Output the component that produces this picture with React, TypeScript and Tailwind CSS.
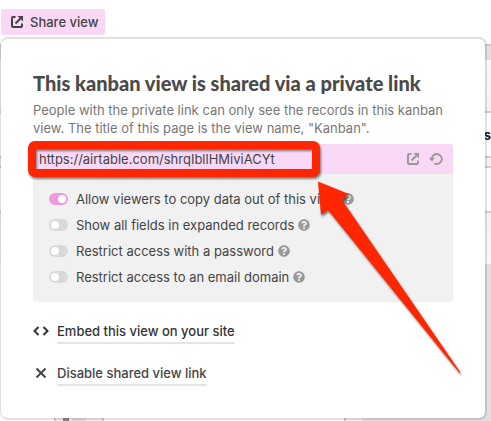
import { useState } from 'react'
import { FaQuestionCircle } from 'react-icons/fa'

const options = [
  { id: 'copy', label: 'Allow viewers to copy data out of this view', on: true },
  { id: 'fields', label: 'Show all fields in expanded records', on: false },
  { id: 'password', label: 'Restrict access with a password', on: false },
  { id: 'domain', label: 'Restrict access to an email domain', on: false },
]

const ShareIcon = ({ className }: { className?: string }) => (
  <svg viewBox="0 0 12 12" className={className} fill="none" stroke="currentColor" aria-hidden="true">
    <path d="M4.5 1H2Q1 1 1 2v8q0 1 1 1h8q1 0 1-1V7.5" strokeWidth="2" />
    <path d="M4.5 7.5 9.5 2.5" strokeWidth="2" />
    <path d="M6.5 0H12v5.5Z" fill="currentColor" stroke="none" />
  </svg>
)

const ResetIcon = () => (
  <svg viewBox="0 0 14 14" className="size-3.5" fill="none" stroke="currentColor" aria-hidden="true">
    <path d="M2.8 7a5 5 0 1 1 2.6 4.4" strokeWidth="1.8" />
    <path d="M0 6h5.8L2.9 9.4Z" fill="currentColor" stroke="none" />
  </svg>
)

const Option = ({ id, label, on }: (typeof options)[number]) => {
  const [checked, setChecked] = useState(on)

  return (
    <li className="flex items-center h-[26px]">
      <input
        id={id}
        type="checkbox"
        role="switch"
        checked={checked}
        onChange={(e) => setChecked(e.target.checked)}
        className="appearance-none flex items-center w-[19px] h-3 p-0.5 rounded-full bg-[#d9d9d9] checked:bg-[#f09ae0] checked:justify-end before:block before:size-2 before:rounded-full before:bg-white"
      />
      <label htmlFor={id} className="ml-2 mr-1">
        {label}
      </label>
      <button type="button" aria-label={`Help: ${label}`} className="text-[#999]">
        <FaQuestionCircle className="size-3" />
      </button>
    </li>
  )
}

// The kanban board that stays visible around the dialog
const Board = () => (
  <div className="[grid-area:1/1] flex flex-col min-w-0 overflow-hidden" aria-hidden="true">
    <div className="h-[7px]" />
    <div className="h-4 bg-[#e0e0e0] border-t-2 border-[#ccc]" />
    <div className="h-[53px] bg-linear-to-b from-[#fafafa] to-[#f2f2f2] border-b-2 border-[#d0d0d0]" />
    <div className="h-[43px] flex items-center justify-end font-bold text-[#222]">rs</div>
    <div className="h-3 bg-[#f2f2f2] border-y-2 border-[#d0d0d0]" />
    <div className="h-[45px] border-b-2 border-[#d0d0d0]" />
    <div className="h-[51px] bg-linear-to-b from-[#f2f2f2] to-[#fafafa]" />
    <div className="flex-1 flex items-end">
      <div className="flex-1 flex h-[3px]">
        <div className="ml-[54px] w-[50px] flex border-x-2 border-[#d0d0d0] bg-[#f0f0f0]">
          <div className="ml-[7px] w-1.5 bg-[#888]" />
          <div className="ml-[3px] w-3.5 bg-[#ddd]" />
        </div>
      </div>
      <div className="w-[147px] h-[3px] bg-[#f2f2f2] border-l-2 border-[#ccc]" />
      <div className="-ml-[129px] w-[129px] self-stretch bg-[#e0e0e0]" />
    </div>
  </div>
)

const App = () => {
  const [url, setUrl] = useState('https://airtable.com/shrqIbllHMiviACYt')

  return (
    <main className="bg-white text-[13px] leading-[18px] text-[#444] font-[Inter,'Liberation_Sans',sans-serif]">
      <header className="pl-px pt-[9px] pb-0.5">
        <button
          type="button"
          className="flex items-center gap-[7px] h-[26px] pl-2.5 pr-[7px] rounded-[3px] bg-[#f8d8f5] font-medium"
        >
          <ShareIcon className="size-3" />
          Share view
        </button>
      </header>
      <div className="grid">
        <Board />
        <section
          aria-labelledby="share-title"
          className="[grid-area:1/1] relative mr-1 mb-px px-8 pt-8 pb-8 bg-white bg-clip-padding border-2 border-l border-black/12 rounded-lg"
        >
          <h1 id="share-title" className="font-[Lato,sans-serif] font-black text-[20px] leading-6 text-[#4a4a4a]">
            This kanban view is shared via a private link
          </h1>
          <p className="mt-1.5 text-[#777]">
            People with the private link can only see the records in this kanban view. The title of
            this page is the view name, "Kanban".
          </p>
          <div className="relative flex items-center gap-2.5 h-[30px] mt-[7px] pl-1.5 pr-2.5 rounded-t-[3px] bg-[#f8d8f5]">
            <input
              type="text"
              aria-label="Shared link"
              value={url}
              onChange={(e) => setUrl(e.target.value)}
              className="flex-1 min-w-0 bg-transparent outline-none"
            />
            <button type="button" aria-label="Open link" className="text-[#999]">
              <ShareIcon className="size-3" />
            </button>
            <button type="button" aria-label="Generate new link" className="text-[#999]">
              <ResetIcon />
            </button>
            <div className="absolute -inset-y-[3px] -left-[5px] w-[292px] border-8 border-[#ff2600] rounded-[7px] drop-shadow-[1px_2px_1px_rgba(0,0,0,0.5)] pointer-events-none" />
          </div>
          <ul className="px-4 py-3 rounded-b-[3px] bg-[#f1f1f1]">
            {options.map((option) => (
              <Option key={option.id} {...option} />
            ))}
          </ul>
          <div className="mt-5 flex items-start">
            <svg viewBox="0 0 16 10" className="w-4 h-2.5 mt-1 mr-2" fill="none" stroke="#333" strokeWidth="2" aria-hidden="true">
              <path d="M5.5 1 1.5 5l4 4M10.5 1l4 4-4 4" />
            </svg>
            <a href="#embed" className="pb-0.5 border-b-2 border-[#e5e5e5] font-medium text-[#333]">
              Embed this view on your site
            </a>
          </div>
          <div className="mt-5 flex items-start">
            <svg viewBox="0 0 16 10" className="w-4 h-2.5 mt-1 mr-2" fill="none" stroke="#444" strokeWidth="2" aria-hidden="true">
              <path d="m3.5.5 9 9M12.5.5l-9 9" />
            </svg>
            <a href="#disable" className="pb-0.5 border-b-2 border-[#e5e5e5] font-medium">
              Disable shared view link
            </a>
          </div>
          <svg
            viewBox="0 0 150 200"
            className="absolute left-[314px] top-[139px] w-[150px] h-[200px] drop-shadow-[1px_2px_1px_rgba(0,0,0,0.5)] pointer-events-none"
            aria-hidden="true"
          >
            <path d="M3 3.500 34 16l-7 6L145.500 194.500l-1 .5L13 32l-7 5Z" fill="#ff2600" />
          </svg>
        </section>
      </div>
    </main>
  )
}

export default App
